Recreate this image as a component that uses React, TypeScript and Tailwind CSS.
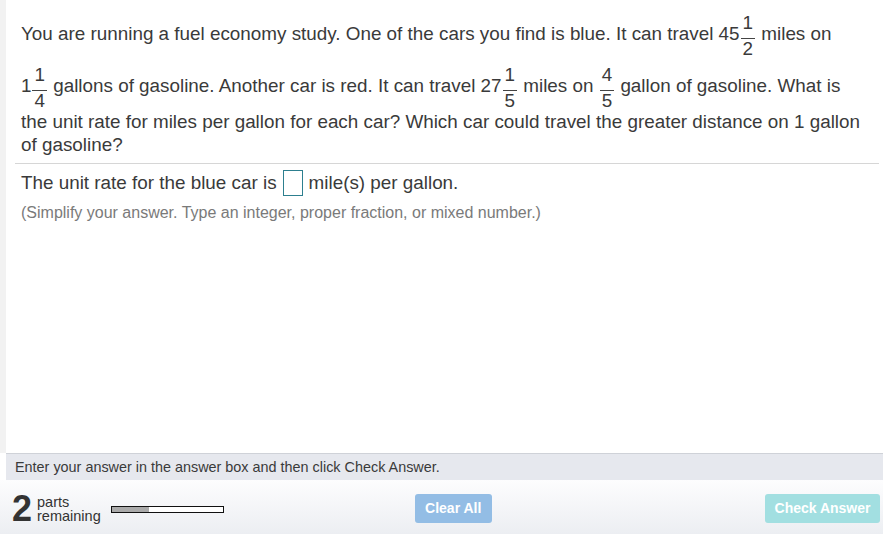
function Frac({ n, d }: { n: string; d: string }) {
  return (
    <span className="inline-flex flex-col items-center align-[11px] mx-[1px]">
      <span className="pt-[6px] leading-[22px] px-[2px]">{n}</span>
      <span className="mt-[3.5px] mb-[1.5px] h-px w-full bg-[#444]" />
      <span className="leading-[18px] px-[2px]">{d}</span>
    </span>
  );
}

export default function App() {
  return (
    <div className="flex h-[534px] w-[883px] flex-col bg-white font-['Liberation_Sans',Arial,sans-serif] text-[#3a3a3a]">
      <div className="flex flex-1">
        <div className="w-[6px] bg-[#f2f2f2]" />
        <div className="flex-1">
          <div className="ml-[9px] mr-[4px] border-b border-[#d6d6d6] pb-[7px] pt-[6px]">
            <p className="pl-[6px] pr-[9px] text-[18.85px] leading-[23px]">
              You are running a fuel economy study. One of the cars you find is blue. It can travel 45
              <Frac n="1" d="2" /> miles on
              <br />
              <span className="whitespace-nowrap">
                1<Frac n="1" d="4" />
              </span>{' '}
              gallons of gasoline. Another car is red. It can travel 27
              <Frac n="1" d="5" /> miles on <Frac n="4" d="5" /> gallon of gasoline. What is the unit rate for
              miles per gallon for each car? Which car could travel the greater distance on 1 gallon of gasoline?
            </p>
          </div>
          <div className="pl-[15px] pt-[6px]">
            <div className="flex items-center text-[18.85px] leading-[26px]">
              <span>The unit rate for the blue car is</span>
              <span className="mx-[6px] h-[26px] w-[20px] border border-[#2d7f8f]" />
              <span>mile(s) per gallon.</span>
            </div>
            <div className="mt-[7px] text-[16px] leading-[20px] text-[#7a7a7a]">
              (Simplify your answer. Type an integer, proper fraction, or mixed number.)
            </div>
          </div>
        </div>
      </div>
      <div className="ml-[6px] h-[27px] border-t border-[#cfd2d8] bg-[#e6e8ee] pl-[9px] text-[14.4px] leading-[26px] text-[#3a3a3a]">
        Enter your answer in the answer box and then click Check Answer.
      </div>
      <div className="flex h-[54px] items-center bg-gradient-to-b from-[#fdfdfe] to-[#eceef2] pl-[12px] pr-[3px] pt-[3px]">
        <span className="text-[36px] font-bold leading-none text-[#333]">2</span>
        <div className="ml-[5px] flex flex-col text-[14.5px] leading-[14px] text-[#333]">
          <span>parts</span>
          <span>remaining</span>
        </div>
        <div className="ml-[10px] mt-[2px] h-[7px] w-[113px] border-[1.5px] border-[#111] bg-white">
          <div className="h-full w-[37px] bg-[#aaaaaa]" />
        </div>
        <button className="ml-[191px] h-[29px] w-[77px] rounded-[3px] bg-[#93bde5] text-[14px] font-bold text-white">
          Clear All
        </button>
        <div className="flex-1" />
        <button className="h-[29px] w-[115px] rounded-[3px] bg-[#a2dfe1] text-[14px] font-bold text-white">
          Check Answer
        </button>
      </div>
    </div>
  );
}
